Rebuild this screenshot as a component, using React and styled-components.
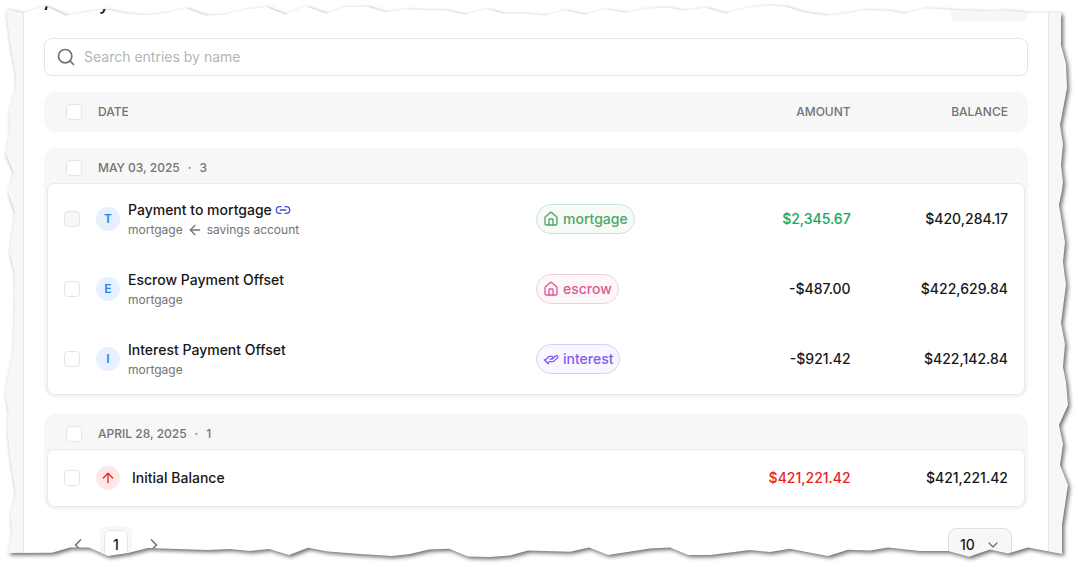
import React from 'react';
import styled, { createGlobalStyle, css } from 'styled-components';
import { Search, Link2, ArrowLeft, ArrowUp, House, HandHelping, ChevronLeft, ChevronRight, ChevronDown } from 'lucide-react';

const GlobalStyle = createGlobalStyle`
  *, *::before, *::after { box-sizing: border-box; }
  body {
    margin: 0;
    background: #fff;
    color: #171717;
    font-family: Inter, "Liberation Sans", sans-serif;
    font-size: 14px;
    line-height: 20px;
    overflow: hidden;
  }
  button, input, select { font: inherit; color: inherit; }
`;

const Page = styled.main`
  position: relative;
  padding: 0 29px 0 23px;
  background: #f7f7f7;
  overflow: hidden;
`;

const Card = styled.section`
  display: flex;
  flex-direction: column;
  gap: 16px;
  padding: 0 20px 3px;
  background: #fff;
  border: solid #e7e7e7;
  border-width: 0 1px;
`;

const CardHeader = styled.header`
  display: flex;
  align-items: center;
  justify-content: space-between;
  margin-top: -14px;
`;

const Title = styled.h2`
  margin: 0;
  font-size: 18px;
  line-height: 28px;
  font-weight: 500;
`;

const NewButton = styled.button`
  width: 78px;
  height: 36px;
  border: 0;
  border-radius: 8px;
  background: #f7f7f7;
  font-weight: 500;
`;

const SearchField = styled.label`
  display: flex;
  align-items: center;
  gap: 8px;
  height: 38px;
  padding: 0 11px;
  border: 1px solid #e5e5e5;
  border-radius: 8px;
  color: #737373;
`;

const SearchInput = styled.input`
  flex: 1;
  min-width: 0;
  padding: 0;
  border: 0;
  outline: 0;
  background: transparent;
  color: #171717;
  &::placeholder { color: #b5b5b5; opacity: 1; }
`;

const columns = css`
  display: grid;
  grid-template-columns: 6fr 2fr 2fr 2fr;
  align-items: center;
`;

const ColumnHeader = styled.div`
  ${columns}
  height: 40px;
  padding: 0 20px;
  border-radius: 12px;
  background: #f7f7f7;
  color: #737373;
  font-size: 12px;
  line-height: 16px;
  font-weight: 500;
`;

const HeaderCell = styled.div`
  grid-column: ${(p) => p.$column};
  text-align: right;
`;

const Heading = styled.label`
  display: flex;
  align-items: center;
  gap: 16px;
  padding-left: 2px;
`;

const Checkbox = styled.input.attrs({ type: 'checkbox' })`
  appearance: none;
  flex: none;
  width: 16px;
  height: 16px;
  margin: 0;
  border: 1px solid #e5e5e5;
  border-radius: 4px;
  background: #fff;
  &:disabled { background: #f7f7f7; }
`;

const Group = styled.section`
  padding: 0 4px 4px;
  border-radius: 12px;
  background: #f7f7f7;
`;

const GroupHeader = styled.header`
  display: flex;
  align-items: center;
  height: 36px;
  padding: 4px 16px 0;
  color: #737373;
  font-size: 12px;
  line-height: 16px;
  font-weight: 500;
`;

const GroupTitle = styled.span`
  display: flex;
  gap: 8px;
`;

const Entries = styled.div`
  border-radius: 6px;
  background: #fff;
  box-shadow: 0 0 0 1px #e9e9e9, 0 1px 2px rgba(0, 0, 0, 0.08);
`;

const Row = styled.div`
  ${columns}
  min-height: ${(p) => (p.$compact ? '56px' : '70px')};
  padding: 0 16px;
`;

const Entry = styled.div`
  display: flex;
  align-items: center;
  gap: 16px;
  min-width: 0;
`;

const EntryBody = styled.div`
  display: flex;
  align-items: center;
  gap: ${(p) => (p.$wide ? '12px' : '8px')};
`;

const EntryText = styled.div`
  padding-top: ${(p) => (p.$stacked ? '2px' : '0')};
`;

const Avatar = styled.span`
  display: flex;
  align-items: center;
  justify-content: center;
  width: 24px;
  height: 24px;
  border-radius: 50%;
  background: ${(p) => (p.$alert ? '#fde8e8' : '#e7f0fe')};
  color: ${(p) => (p.$alert ? '#ec2222' : '#2e7fee')};
  font-size: 12px;
  font-weight: 600;
`;

const Name = styled.a`
  display: flex;
  align-items: center;
  gap: 3px;
  color: #171717;
  font-weight: 500;
  text-decoration: none;
  svg { color: #444ce7; }
`;

const Account = styled.div`
  display: flex;
  align-items: center;
  gap: 4px;
  color: #737373;
  font-size: 12px;
  line-height: 20px;
`;

const Tag = styled.button`
  display: inline-flex;
  align-items: center;
  gap: 4px;
  height: 30px;
  padding: 0 6px;
  border: 1px solid color-mix(in srgb, ${(p) => p.$color} 30%, white);
  border-radius: 15px;
  background: color-mix(in srgb, ${(p) => p.$color} 5%, white);
  color: ${(p) => p.$color};
  font-weight: 500;
`;

const Money = styled.div`
  grid-column: ${(p) => p.$column};
  color: ${(p) => p.$color || '#171717'};
  font-weight: 500;
  text-align: right;
`;

const Footer = styled.footer`
  display: flex;
  align-items: center;
  justify-content: space-between;
  padding: 0 16px;
`;

const Pager = styled.nav`
  display: flex;
  align-items: center;
`;

const PageArrow = styled.button`
  display: flex;
  align-items: center;
  justify-content: center;
  width: 36px;
  height: 32px;
  padding: 0;
  border: 0;
  background: none;
  color: #737373;
`;

const PageTrack = styled.div`
  margin: 0 4px;
  padding: 4px;
  border-radius: 8px;
  background: #f7f7f7;
`;

const PageNumber = styled.button`
  width: 24px;
  height: 30px;
  padding: 0;
  border: 1px solid #e7e7e7;
  border-radius: 6px;
  background: #fff;
  font-weight: 500;
`;

const PageSize = styled.div`
  display: grid;
  align-items: center;
  color: #737373;
  > * { grid-area: 1 / 1; }
  svg { justify-self: end; margin-right: 11px; pointer-events: none; }
`;

const SizeSelect = styled.select`
  appearance: none;
  width: 64px;
  height: 34px;
  padding: 0 11px;
  border: 1px solid #e0e0e0;
  border-radius: 8px;
  background: #f7f7f7;
  color: #171717;
  font-weight: 500;
`;

const Tear = styled.svg`
  position: absolute;
  inset: 0;
  width: 100%;
  height: 100%;
  pointer-events: none;
`;

const tearPoints = `6,9 23,12.7 46,6 66,15.5 86,12 105,9 123,13 145,15.3 166,13 185,8 206,15.5 225,14.5 246,9.5 266,6.7 285,14.5 305,6 326,13.5 345,7 367,6.5 385,12 406,9.3 447,10.5 465,14.5 487,9 503,13.5 525,13.5 545,15.5 565,10.5 585,14.5 605,9.5 625,12.5 647,8.5 667,7.5 685,10.5 705,7.5 726,13.5 747,7.5 767,5.5 785,6.5 805,12.5 827,15.5 845,13.5 863,10 887,10.5 905,13.5 925,8 947,9.5 987,11 1007,10 1027,12.5 1061,12.5
1061,45 1066,64 1067,88 1060,125 1063,144 1061,165 1063,182 1062,190 1059,205 1065,242 1063,262 1066,285 1061,323 1065,344 1063,367 1066,382 1068,405 1059,425 1063,444 1060,465 1068,485 1062,525 1062,554
1028,547.5 1008,553.5 990,549.5 969,556.7 948,551 920,551 888,547.5 870,550.5 848,549.7 828,556 809,552.5 790,548.7 770,552 750,550 710,555 688,555 670,547.5 650,548.5 608,555 589,547.5 570,551.7 528,550.5 510,555.5 490,557 468,556.5 449,548.7 429,549.5 410,554 392,556 360,554 328,551.5 308,547.7 289,555 269,549 250,551 230,549 208,550 148,548 128,553 108,556 89,547.5 70,547.5 52,552.7 8,553
12,533 10.5,513 15.5,493 10,457 7.5,433 8.5,413 5.5,393 7.5,380 13.5,347 15,290 14,270 9.5,252 15,212 8,192 13.5,172 5.5,153 9.5,133 9.5,110 15.5,88 15.5,73 10,43`;

function TornEdge() {
  return (
    <Tear viewBox="0 0 1078 567" preserveAspectRatio="none" aria-hidden="true">
      <defs>
        <mask id="outside" maskUnits="userSpaceOnUse" x="0" y="0" width="1078" height="567">
          <rect width="1078" height="567" fill="#fff" />
          <polygon points={tearPoints} fill="#000" />
        </mask>
        <filter id="soften" x="-5%" y="-5%" width="110%" height="110%">
          <feGaussianBlur stdDeviation="2" />
        </filter>
      </defs>
      <g mask="url(#outside)">
        <rect width="1078" height="567" fill="#fff" />
        <polygon points={tearPoints} transform="translate(2 2)" fill="#000" opacity="0.6" filter="url(#soften)" />
      </g>
    </Tear>
  );
}

const groups = [
  {
    date: 'MAY 03, 2025',
    entries: [
      { initial: 'T', name: 'Payment to mortgage', linked: true, account: 'mortgage', from: 'savings account', tag: 'mortgage', icon: House, tagColor: '#4da568', amount: '$2,345.67', amountColor: '#10a861', balance: '$420,284.17' },
      { initial: 'E', name: 'Escrow Payment Offset', account: 'mortgage', tag: 'escrow', icon: House, tagColor: '#db5a96', amount: '-$487.00', balance: '$422,629.84' },
      { initial: 'I', name: 'Interest Payment Offset', account: 'mortgage', tag: 'interest', icon: HandHelping, tagColor: '#805dee', amount: '-$921.42', balance: '$422,142.84' },
    ],
  },
  {
    date: 'APRIL 28, 2025',
    entries: [
      { name: 'Initial Balance', amount: '$421,221.42', amountColor: '#ec2222', balance: '$421,221.42' },
    ],
  },
];

function EntryRow({ entry }) {
  const TagIcon = entry.icon;
  return (
    <Row $compact={!entry.account}>
      <Entry>
        <Checkbox aria-label={entry.name} disabled={entry.linked} />
        <EntryBody $wide={!entry.account}>
          <Avatar $alert={!entry.initial}>{entry.initial || <ArrowUp size={16} />}</Avatar>
          <EntryText $stacked={Boolean(entry.account)}>
            <Name href="#">
              {entry.name}
              {entry.linked && <Link2 size={16} />}
            </Name>
            {entry.account && (
              <Account>
                {entry.account}
                {entry.from && <ArrowLeft size={16} />}
                {entry.from}
              </Account>
            )}
          </EntryText>
        </EntryBody>
      </Entry>
      {entry.tag && (
        <div>
          <Tag $color={entry.tagColor}>
            <TagIcon size={16} />
            {entry.tag}
          </Tag>
        </div>
      )}
      <Money $column={3} $color={entry.amountColor}>{entry.amount}</Money>
      <Money $column={4}>{entry.balance}</Money>
    </Row>
  );
}

export default function App() {
  return (
    <>
      <GlobalStyle />
      <Page>
        <Card>
          <CardHeader>
            <Title>Activity</Title>
            <NewButton aria-label="New entry" />
          </CardHeader>
          <SearchField>
            <Search size={20} />
            <SearchInput type="search" aria-label="Search entries by name" placeholder="Search entries by name" />
          </SearchField>
          <ColumnHeader>
            <Heading><Checkbox />DATE</Heading>
            <HeaderCell $column={3}>AMOUNT</HeaderCell>
            <HeaderCell $column={4}>BALANCE</HeaderCell>
          </ColumnHeader>
          {groups.map((group) => (
            <Group key={group.date}>
              <GroupHeader>
                <Heading>
                  <Checkbox />
                  <GroupTitle>
                    <span>{group.date}</span>
                    <span>·</span>
                    <span>{group.entries.length}</span>
                  </GroupTitle>
                </Heading>
              </GroupHeader>
              <Entries>
                {group.entries.map((entry) => <EntryRow key={entry.name} entry={entry} />)}
              </Entries>
            </Group>
          ))}
          <Footer>
            <Pager aria-label="Pages">
              <PageArrow aria-label="Previous page"><ChevronLeft size={20} /></PageArrow>
              <PageTrack><PageNumber>1</PageNumber></PageTrack>
              <PageArrow aria-label="Next page"><ChevronRight size={20} /></PageArrow>
            </Pager>
            <PageSize>
              <SizeSelect aria-label="Entries per page" defaultValue="10">
                <option>10</option>
                <option>20</option>
                <option>50</option>
              </SizeSelect>
              <ChevronDown size={16} />
            </PageSize>
          </Footer>
        </Card>
        <TornEdge />
      </Page>
    </>
  );
}
